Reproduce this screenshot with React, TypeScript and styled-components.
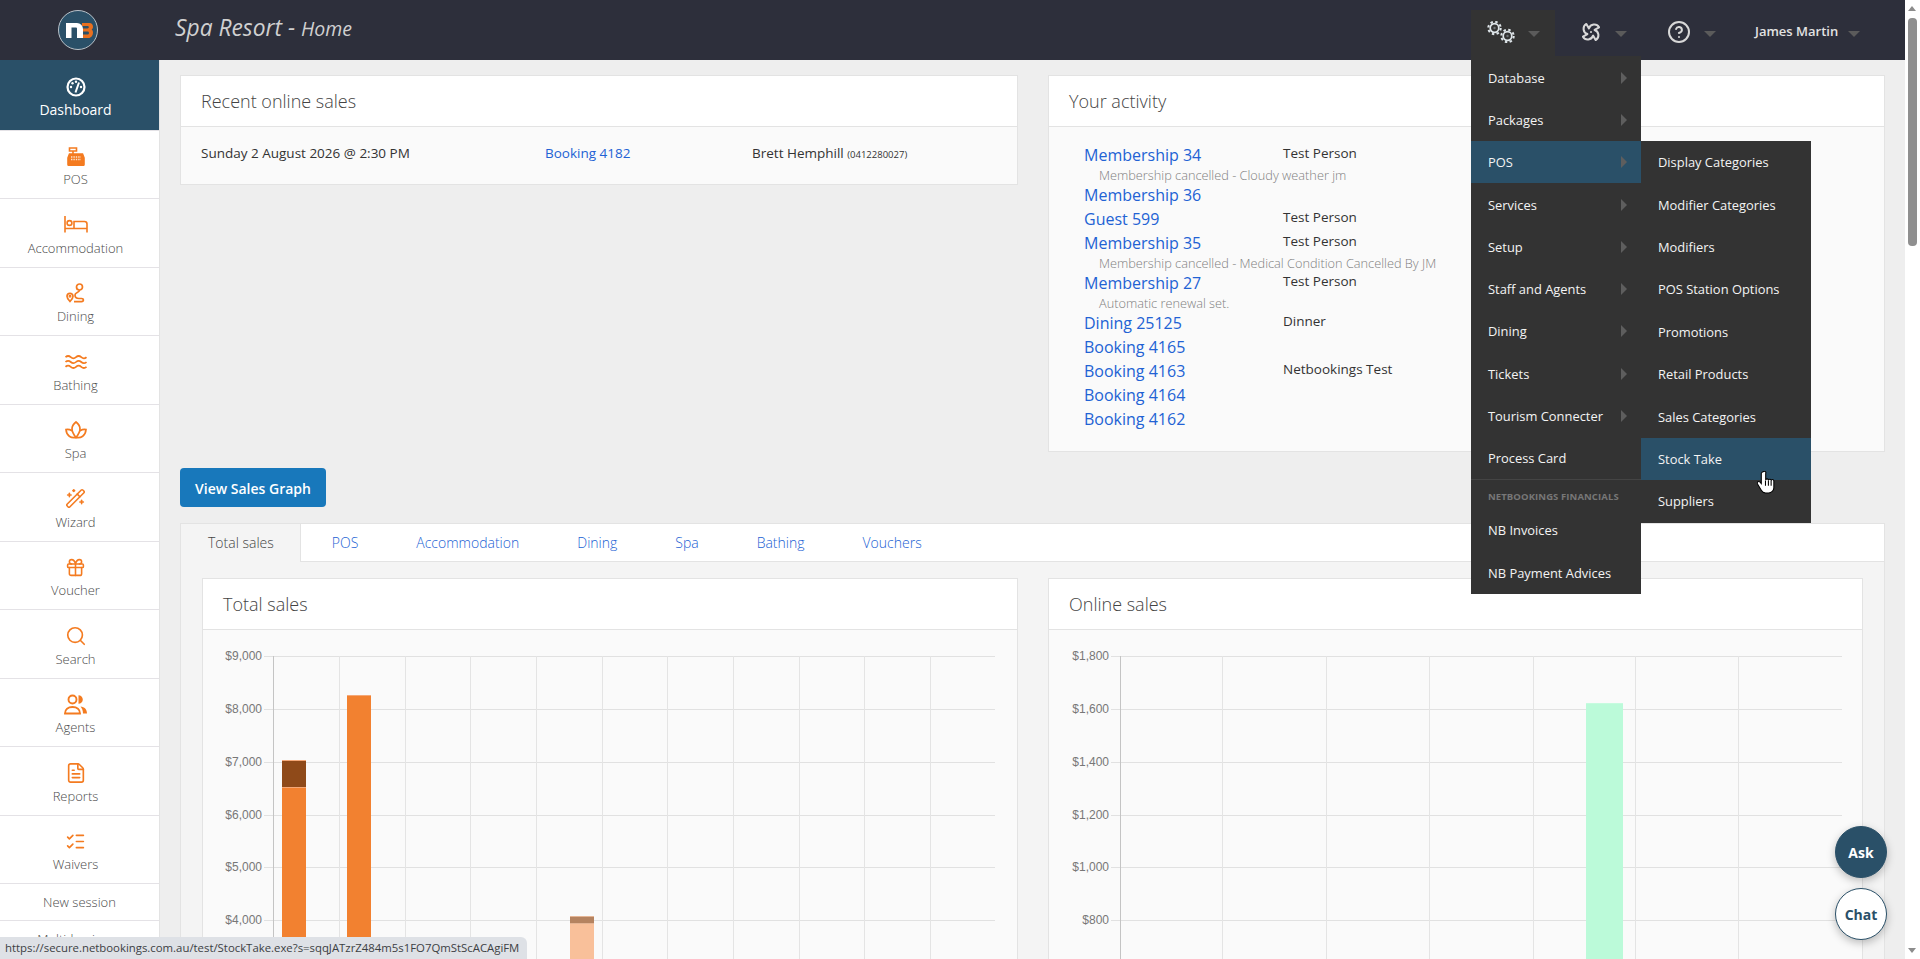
import React from "react";
import styled, { createGlobalStyle } from "styled-components";
import { Fan, CircleHelp, WandSparkles, Gift, Search, FileText, ListChecks } from "lucide-react";

const Global = createGlobalStyle`
  html, body { margin: 0; padding: 0; height: 100%; overflow: hidden; }
  body { font-family: "Open Sans", "Liberation Sans", sans-serif; color: #333; }
  * { box-sizing: border-box; }
`;

const Viewport = styled.div`
  position: relative; display: flex; width: 1920px; height: 959px; overflow: hidden;
`;
const Page = styled.div`
  flex: 1; min-width: 0; display: flex; flex-direction: column; background: #eee; overflow: hidden;
`;
const TopBar = styled.header`
  flex: none; height: 60px; background: #2d2f3b; display: flex; align-items: stretch; position: relative; z-index: 5;
`;
const LogoCell = styled.div`
  width: 175px; padding: 10px 0 0 58px;
`;
const Title = styled.div`
  font-style: italic; font-weight: 400; font-size: 22.8px; color: #d0d0d0; line-height: 56px; white-space: nowrap;
  small { font-size: 19.5px; font-weight: 400; }
`;
const TopNav = styled.nav`
  margin-left: auto; display: flex; align-items: flex-end;
`;
const NavButton = styled.div<{ $left: number; $right: number; $open?: boolean }>`
  position: relative; height: 50px; display: flex; align-items: center; gap: 13px;
  padding: 0 ${p => p.$right}px 6px ${p => p.$left}px;
  background: ${p => (p.$open ? "#333" : "transparent")};
  color: #ddd;
  svg { display: block; }
`;
const Caret = styled.span`
  width: 0; height: 0; border: 6px solid transparent; border-top: 6px solid #5b5b5b; border-bottom: 0; margin-top: 3px;
`;
const UserName = styled.span`
  font-size: 13px; font-weight: 600; color: #e2e2e2; white-space: nowrap; width: 80px; margin-top: -2px;
`;
const PinwheelIcon = styled(Fan)`
  transform: rotate(45deg);
`;
const Menu = styled.div<{ $top: number; $left: number; $flush?: boolean }>`
  position: absolute; top: ${p => p.$top}px; left: ${p => p.$left}px; width: 170px; background: #333; padding-top: ${p => (p.$flush ? 0 : 0.5)}px;
`;
const MenuItem = styled.div<{ $active?: boolean; $sub?: boolean; $h: number }>`
  position: relative; height: ${p => p.$h}px; padding: 0 17px; display: flex; align-items: center;
  font-size: 12.9px; color: #f4f4f4; white-space: nowrap;
  background: ${p => (p.$active ? "#2a5068" : "transparent")};
  ${p => p.$sub ? `&::after { content: ""; position: absolute; right: 14px; top: 50%; margin-top: -6px; border: 6px solid transparent; border-left: 6px solid #5e5e5e; border-right: 0; }` : ""}
`;
const MenuDivider = styled.div`
  height: 1px; background: #444;
`;
const MenuHeading = styled.div`
  height: 28.5px; padding: 6px 17px 0; font-size: 9.5px; font-weight: 700; color: #777; white-space: nowrap; line-height: 22px; letter-spacing: .1px;
`;
const Body = styled.div`
  flex: 1; display: flex; min-height: 0; align-items: flex-start;
`;
const Sidebar = styled.aside`
  flex: none; width: 160px; height: 899px; background: #fff; border-right: 1px solid #e3e3e3; overflow: hidden;
`;
const NavItem = styled.div<{ $active?: boolean }>`
  height: ${p => (p.$active ? 69.5 : 68.5)}px; padding: ${p => (p.$active ? "16px" : "14.5px")} 8px 0 0;
  display: flex; flex-direction: column; align-items: center;
  gap: 3px;
  background: ${p => (p.$active ? "#2a5068" : "#fff")};
  color: ${p => (p.$active ? "#fff" : "#f47b20")};
  & + & { border-top: 1.5px solid #e4e2e6; }
`;
const NavIcon = styled.div`
  height: 22px; display: flex; align-items: center; justify-content: center;
`;
const NavLabel = styled.div<{ $active?: boolean }>`
  line-height: 18px; font-size: ${p => (p.$active ? 14 : 13)}px; color: ${p => (p.$active ? "#fff" : "#4a4a4a")}; font-weight: ${p => (p.$active ? 400 : 300)};
`;
const SideLink = styled.div`
  height: 37px; border-top: 1.5px solid #e4e2e6; text-align: center; line-height: 37px; font-size: 13px; font-weight: 300; color: #4a4a4a;
`;
const Main = styled.main`
  flex: 1; min-width: 0; padding: 15px 20px 0 20px;
`;
const TopRow = styled.div`
  display: grid; grid-template-columns: 838px 837px; column-gap: 30px; align-items: start;
`;
const Card = styled.section`
  background: #fafafa; border: 1px solid #e3e3e3;
`;
const CardHead = styled.div`
  height: 51px; background: #fff; border-bottom: 1px solid #e3e3e3; padding: 0 20px;
  font-size: 18px; font-weight: 300; line-height: 50px; color: #444;
`;
const SaleRow = styled.div`
  height: 57px; padding: 16px 20px 0; display: grid; grid-template-columns: 344px 207px 1fr; font-size: 13.5px; line-height: 20px; color: #333;
  small { font-size: 9.5px; }
`;
const Link = styled.a`
  color: #2262d4; text-decoration: none;
`;
const ActivityBody = styled.div`
  padding: 16px 20px 20px 35px;
`;
const ActivityRow = styled.div`
  display: grid; grid-template-columns: 199px 1fr; height: 24px; align-items: start;
`;
const ActivityLink = styled(Link)`
  font-size: 16px; line-height: 24px;
`;
const ActivityWho = styled.span`
  font-size: 13.5px; line-height: 20px; color: #333;
`;
const ActivityNote = styled.div`
  height: 16px; line-height: 16px; padding-left: 15px; font-size: 12.75px; font-weight: 300; color: #808080; white-space: nowrap;
`;
const PrimaryButton = styled.button`
  display: block; margin: 16px 0 16px; height: 39px; width: 146px; border: 0; border-radius: 4px; background: #1878bb;
  color: #fff; font: 600 14px "Open Sans", sans-serif; padding: 1px 0 0;
`;
const TabBox = styled.div`
  border: 1px solid #e3e3e3; border-left-width: 1.5px; background: #f4f4f4;
`;
const TabBar = styled.div`
  height: 38px; background: #fff; border-bottom: 1px solid #e3e3e3; display: flex; gap: 0;
`;
const Tab = styled.div<{ $active?: boolean }>`
  height: ${p => (p.$active ? 38 : 37)}px; line-height: 37px; font-size: 14px; font-weight: 300; white-space: nowrap;
  padding: 0 ${p => (p.$active ? "26px 0 27px" : "29px")};
  ${p => p.$active ? "background:#f4f4f4;color:#444;border-right:1px solid #e3e3e3;margin-right:2px;" : "color:#2262d4;"}
`;
const TabContent = styled.div`
  display: grid; grid-template-columns: 816px 815px; column-gap: 30px; padding: 16px 21px 0 21px;
`;
const ChartSvg = styled.svg`
  display: block;
  text { font-family: "Liberation Sans", Arial, sans-serif; font-size: 12px; fill: #777; }
`;
const ScrollTrack = styled.div`
  flex: none; width: 15px; height: 959px; background: #fff; position: relative;
`;
const ScrollUp = styled.div`
  position: absolute; top: 6px; left: 3px; border: 4.5px solid transparent; border-bottom: 5px solid #8c8c8c; border-top: 0;
`;
const ScrollDown = styled.div`
  position: absolute; bottom: 6px; left: 3px; border: 4.5px solid transparent; border-top: 5px solid #8c8c8c; border-bottom: 0;
`;
const ScrollThumb = styled.div`
  position: absolute; top: 18px; left: 3px; width: 9px; height: 228px; border-radius: 4px; background: #8f8f8f;
`;
const StatusBar = styled.div`
  position: absolute; left: 0; bottom: 0; height: 22px; width: 527px; background: #dee1e6; border-top-right-radius: 6px;
  font-size: 11.36px; line-height: 22px; padding-left: 5px; color: #3c4043; white-space: nowrap; z-index: 20;
`;
const Bubble = styled.div<{ $top: number; $dark?: boolean }>`
  position: absolute; left: 1835px; top: ${p => p.$top}px; width: 52px; height: 52px; border-radius: 50%;
  display: flex; align-items: center; justify-content: center;
  font-size: 14px; font-weight: 700; border: 1px solid #2a5068;
  background: ${p => (p.$dark ? "#2a5068" : "#fff")}; color: ${p => (p.$dark ? "#fff" : "#2a5068")};
  box-shadow: 0 3px 8px rgba(0,0,0,.25); z-index: 15;
`;
const HandCursor = styled.svg`
  position: absolute; left: 1757px; top: 471px; z-index: 30;
`;

const Logo = () => (
  <svg width="40" height="40" viewBox="0 0 40 40">
    <circle cx="20" cy="20" r="19.5" fill="#2a5068" stroke="#b9c2c9" />
    <path d="M24 13h7.500c2 0 3.500 1.500 3.500 3.700 0 1.300-.6 2.200-1.400 2.800 .9.6 1.400 1.600 1.400 3 0 3-2 5.500-4.500 5.500H24v-3.500h5.500c1 0 1.500-.7 1.500-1.500s-.5-1.500-1.500-1.500H25v-3h4.500c.8 0 1.300-.5 1.300-1.200 0-.8-.5-1.300-1.300-1.300H24Z" fill="#e8701f" />
    <path d="M8 13h11a6 6 0 0 1 6 6v9h-6v-9.500a1 1 0 0 0-1-1h-4.500V28H8Z" fill="#fff" />
  </svg>
);
const Gauge = () => (
  <svg width="20" height="20" viewBox="0 0 20 20" fill="none" stroke="#fff">
    <circle cx="10" cy="10" r="8.500" strokeWidth="2.200" />
    <path d="M9.500 15.500 13 5.500" strokeWidth="2" />
    <g fill="#fff" stroke="none"><circle cx="5" cy="10" r="1.200" /><circle cx="6.500" cy="6.200" r="1.200" /><circle cx="10" cy="4.800" r="1.200" /><circle cx="15" cy="10" r="1.200" /></g>
  </svg>
);
const Register = () => (
  <svg width="18" height="19" viewBox="0 0 18 19" fill="none" stroke="currentColor" strokeWidth="1.600">
    <path d="M2.500 1h7v3h-7zM6 4v3" />
    <path d="M1 17.500V11l1.500-4h13L17 11v6.500a.8.8 0 0 1-.8.8H1.800a.8.8 0 0 1-.8-.8Z" fill="currentColor" />
    <path d="M4 10h10M4 12.500h10" strokeDasharray="1.400 1" stroke="#fde3cf" strokeWidth="1.300" />
  </svg>
);
const Bed = () => (
  <svg width="24" height="17" viewBox="0 0 24 17" fill="none" stroke="currentColor" strokeWidth="1.600">
    <path d="M1 0v16.500M1 12.500h22M23 16.500V8a2.500 2.500 0 0 0-2.500-2.500H10v7" />
    <circle cx="5.500" cy="7" r="2.400" />
  </svg>
);
const RouteIcon = () => (
  <svg width="20" height="20" viewBox="0 0 20 20" fill="none" stroke="currentColor" strokeWidth="1.700">
    <circle cx="13.500" cy="4" r="3" />
    <path d="M13.500 7c0 3-4.500 2-4.500 5s2 3.500 4 3.500h2.500c2.500 0 2.500 3.200 0 3.200H8" />
    <path d="M4 18.500s-3-3-3-5.200a3 3 0 0 1 6 0c0 2.200-3 5.200-3 5.200Z" />
    <circle cx="4" cy="13.300" r=".6" />
  </svg>
);
const WaveIcon = () => (
  <svg width="22" height="14" viewBox="0 0 22 14" fill="none" stroke="currentColor" strokeWidth="1.700">
    <path d="M.500 2.200q2.600-2.400 5.250 0t5.250 0 5.250 0 5.250 0" />
    <path d="M.500 7q2.600-2.400 5.250 0t5.250 0 5.250 0 5.250 0" />
    <path d="M.500 11.800q2.600-2.400 5.250 0t5.250 0 5.250 0 5.250 0" />
  </svg>
);
const Lotus = () => (
  <svg width="22" height="18" viewBox="0 0 22 18" fill="none" stroke="currentColor" strokeWidth="1.700">
    <path d="M11 1c2.600 2 4 4.300 4 7 0 3.500-2 6-4 8.500-2-2.500-4-5-4-8.500 0-2.700 1.400-5 4-7Z" />
    <path d="M11 16.500c-5 1-9.500-1.500-10-8 2-.3 4 .1 6 1.200M11 16.500c5 1 9.500-1.500 10-8-2-.3-4 .1-6 1.200" />
  </svg>
);
const AgentsIcon = () => (
  <svg width="24" height="21" viewBox="0 0 24 21" fill="none" stroke="currentColor" strokeWidth="1.900">
    <circle cx="8.500" cy="5.500" r="4" />
    <path d="M1 19.500c0-4 3-6.500 7.500-6.500s7.500 2.500 7.500 6.500Z" />
    <path d="M14.500 1.200a4.300 4.300 0 0 1 0 8.600ZM16.500 12.500c4 .3 6.500 3 6.500 7h-4c0-3-1-5.200-2.500-7Z" fill="currentColor" stroke="none" />
  </svg>
);
const Gear = ({ cx, cy }: { cx: number; cy: number }) => (
  <g fill="none" stroke="#dfe6ea">
    <circle cx={cx} cy={cy} r="4.300" strokeWidth="1.700" />
    <circle cx={cx} cy={cy} r="6.200" strokeWidth="2" strokeDasharray="2.430 2.440" />
    <circle cx={cx} cy={cy} r="1.200" fill="#6d7377" stroke="none" />
  </g>
);
const Gears = () => (
  <svg width="28" height="22" viewBox="0 0 28 22">
    <Gear cx={7.500} cy={7} />
    <Gear cx={20.500} cy={15} />
  </svg>
);
const Hand = () => (
  <HandCursor width="18" height="23" viewBox="0 0 17 22" fill="#fff" stroke="#000" strokeWidth="1">
    <path d="M5.500 1a1.500 1.500 0 0 0-1.500 1.500V12L2.600 10.400a1.500 1.500 0 0 0-2.200 2L4 18.500a5 5 0 0 0 4 2.500h3a5 5 0 0 0 5-5V9.500a1.300 1.300 0 0 0-2.600 0 1.300 1.300 0 0 0-2.600-.5 1.300 1.300 0 0 0-2.600-.3V2.500A1.500 1.500 0 0 0 5.500 1Z" />
    <path d="M8 9v5M10.800 9v5M13.400 9.500V14" fill="none" />
  </HandCursor>
);

const navItems: [string, React.ReactNode][] = [
  ["POS", <Register />],
  ["Accommodation", <Bed />],
  ["Dining", <RouteIcon />],
  ["Bathing", <WaveIcon />],
  ["Spa", <Lotus />],
  ["Wizard", <WandSparkles size={21} strokeWidth={1.8} />],
  ["Voucher", <Gift size={21} strokeWidth={1.8} />],
  ["Search", <Search size={22} strokeWidth={1.8} />],
  ["Agents", <AgentsIcon />],
  ["Reports", <FileText size={22} strokeWidth={1.8} />],
  ["Waivers", <ListChecks size={21} strokeWidth={1.9} />],
];

const mainMenu: [string, boolean][] = [
  ["Database", true], ["Packages", true], ["POS", true], ["Services", true], ["Setup", true],
  ["Staff and Agents", true], ["Dining", true], ["Tickets", true], ["Tourism Connecter", true], ["Process Card", false],
];
const subMenu = ["Display Categories", "Modifier Categories", "Modifiers", "POS Station Options", "Promotions", "Retail Products", "Sales Categories", "Stock Take", "Suppliers"];

type Activity = { link: string; who?: string; note?: string };
const activity: Activity[] = [
  { link: "Membership 34", who: "Test Person", note: "Membership cancelled - Cloudy weather jm" },
  { link: "Membership 36" },
  { link: "Guest 599", who: "Test Person" },
  { link: "Membership 35", who: "Test Person", note: "Membership cancelled - Medical Condition Cancelled By JM" },
  { link: "Membership 27", who: "Test Person", note: "Automatic renewal set." },
  { link: "Dining 25125", who: "Dinner" },
  { link: "Booking 4165" },
  { link: "Booking 4163", who: "Netbookings Test" },
  { link: "Booking 4164" },
  { link: "Booking 4162" },
];

type Bar = { x: number; w: number; top: number; split?: number; fill: string; cap?: string; edge: string };
type ChartProps = { ox: number; width: number; labels: string[]; axis: number; right: number; vlines: number[]; bars: Bar[] };
const GRID_Y = [656, 709, 762, 815, 867, 920, 973, 1026];
const Chart = ({ ox, width, labels, axis, right, vlines, bars }: ChartProps) => (
  <ChartSvg width={width} height={400} viewBox={`${ox} 630 ${width} 400`}>
    {labels.map((l, i) => (
      <g key={l}>
        <line x1={axis - 9} x2={right} y1={GRID_Y[i] + .5} y2={GRID_Y[i] + .5} stroke="#e1e1e1" />
        <text x={axis - 11} y={GRID_Y[i] + 3.5} textAnchor="end">{l}</text>
      </g>
    ))}
    {vlines.map(x => <line key={x} x1={x + .5} x2={x + .5} y1={656} y2={1030} stroke="#e4e4e4" />)}
    <line x1={axis + .5} x2={axis + .5} y1={656} y2={1030} stroke="#c4c4c4" />
    {bars.map(b => (
      <g key={b.x}>
        {b.cap && <rect x={b.x} y={b.top} width={b.w} height={(b.split as number) - b.top} fill={b.cap} />}
        <rect x={b.x} y={b.split ?? b.top} width={b.w} height={1030 - (b.split ?? b.top)} fill={b.fill} />
        <line x1={b.x} x2={b.x + b.w} y1={b.top + .5} y2={b.top + .5} stroke={b.edge} />
        {b.split && <line x1={b.x} x2={b.x + b.w} y1={b.split + .5} y2={b.split + .5} stroke={b.edge} />}
      </g>
    ))}
  </ChartSvg>
);

export default function App() {
  return (
    <Viewport>
      <Global />
      <Page>
        <TopBar>
          <LogoCell><Logo /></LogoCell>
          <Title>Spa Resort - <small>Home</small></Title>
          <TopNav>
            <NavButton $left={16} $right={15} $open>
              <Gears />
              <Caret />
              <Menu $top={46} $left={0}>
                {mainMenu.map(([m, s], i) => <MenuItem key={m} $h={42.3} $sub={s} $active={i === 2}>{m}</MenuItem>)}
                <MenuDivider />
                <MenuHeading>NETBOOKINGS FINANCIALS</MenuHeading>
                <MenuItem $h={42.5}>NB Invoices</MenuItem>
                <MenuItem $h={42.5}>NB Payment Advices</MenuItem>
              </Menu>
              <Menu $top={131} $left={170} $flush>
                {subMenu.map((m, i) => <MenuItem key={m} $h={42.4} $active={i === 7}>{m}</MenuItem>)}
              </Menu>
            </NavButton>
            <NavButton $left={25} $right={25}>
              <PinwheelIcon size={22} strokeWidth={2.2} color="#d8d8d8" />
              <Caret />
            </NavButton>
            <NavButton $left={15} $right={39}>
              <CircleHelp size={24} strokeWidth={2} color="#d8d8d8" />
              <Caret />
            </NavButton>
            <NavButton $left={0} $right={45}>
              <UserName>James Martin</UserName>
              <Caret />
            </NavButton>
          </TopNav>
        </TopBar>
        <Body>
          <Sidebar>
            <NavItem $active>
              <NavIcon><Gauge /></NavIcon>
              <NavLabel $active>Dashboard</NavLabel>
            </NavItem>
            {navItems.map(([label, icon]) => (
              <NavItem key={label}>
                <NavIcon>{icon}</NavIcon>
                <NavLabel>{label}</NavLabel>
              </NavItem>
            ))}
            <SideLink>New session</SideLink>
            <SideLink>Multi-business</SideLink>
          </Sidebar>
          <Main>
            <TopRow>
              <Card>
                <CardHead>Recent online sales</CardHead>
                <SaleRow>
                  <span>Sunday 2 August 2026 @ 2:30 PM</span>
                  <Link>Booking 4182</Link>
                  <span>Brett Hemphill <small>(0412280027)</small></span>
                </SaleRow>
              </Card>
              <Card>
                <CardHead>Your activity</CardHead>
                <ActivityBody>
                  {activity.map(a => (
                    <React.Fragment key={a.link}>
                      <ActivityRow>
                        <ActivityLink>{a.link}</ActivityLink>
                        <ActivityWho>{a.who}</ActivityWho>
                      </ActivityRow>
                      {a.note && <ActivityNote>{a.note}</ActivityNote>}
                    </React.Fragment>
                  ))}
                </ActivityBody>
              </Card>
            </TopRow>
            <PrimaryButton>View Sales Graph</PrimaryButton>
            <TabBox>
              <TabBar>
                <Tab $active>Total sales</Tab>
                {["POS", "Accommodation", "Dining", "Spa", "Bathing", "Vouchers"].map(t => <Tab key={t}>{t}</Tab>)}
              </TabBar>
              <TabContent>
                <Card>
                  <CardHead>Total sales</CardHead>
                  <Chart
                    ox={203} width={814} axis={273} right={995}
                    labels={["$9,000", "$8,000", "$7,000", "$6,000", "$5,000", "$4,000"]}
                    vlines={[339, 405, 470, 536, 602, 667, 733, 799, 864, 930]}
                    bars={[
                      { x: 282, w: 24, top: 760, split: 787, cap: "#8f4a19", fill: "#f28130", edge: "#f5a877" },
                      { x: 347, w: 24, top: 695, fill: "#f28130", edge: "#f5a877" },
                      { x: 570, w: 24, top: 916, split: 923, cap: "#b58360", fill: "#f9c09a", edge: "#e5b595" },
                    ]}
                  />
                </Card>
                <Card>
                  <CardHead>Online sales</CardHead>
                  <Chart
                    ox={1049} width={813} axis={1120} right={1842}
                    labels={["$1,800", "$1,600", "$1,400", "$1,200", "$1,000", "$800"]}
                    vlines={[1222, 1326, 1429, 1533, 1635, 1738]}
                    bars={[{ x: 1586, w: 37, top: 703, fill: "#bbfad9", edge: "#c6fbdf" }]}
                  />
                </Card>
              </TabContent>
            </TabBox>
          </Main>
        </Body>
      </Page>
      <ScrollTrack>
        <ScrollUp />
        <ScrollThumb />
        <ScrollDown />
      </ScrollTrack>
      <Hand />
      <Bubble $top={826} $dark>Ask</Bubble>
      <Bubble $top={888}>Chat</Bubble>
      <StatusBar>https://secure.netbookings.com.au/test/StockTake.exe?s=sqqJATzrZ484m5s1FO7QmStScACAgiFM</StatusBar>
    </Viewport>
  );
}
